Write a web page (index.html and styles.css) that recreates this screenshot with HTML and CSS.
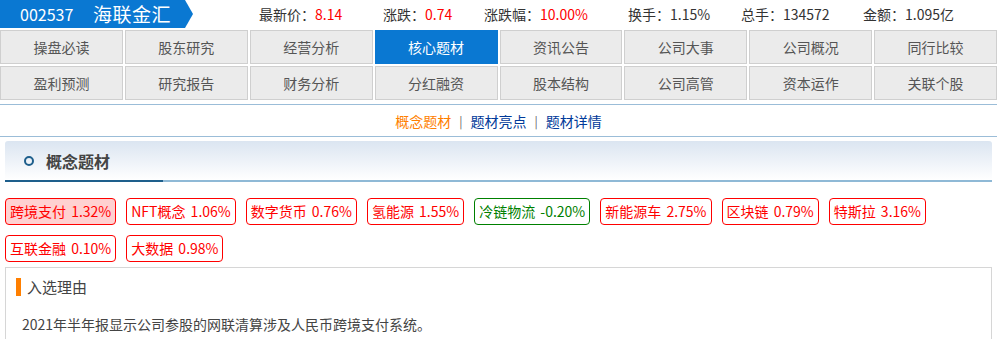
FILE: index.html
```html
<!DOCTYPE html>
<html lang="zh-CN">
<head>
  <meta charset="UTF-8">
  <title>海联金汇 核心题材</title>
  <link rel="stylesheet" href="styles.css">
</head>
<body>

  <!-- 股票行情头部 -->
  <div class="stock-head">
    <div class="stock-name">
      <span class="code">002537</span>
      <span class="name">海联金汇</span>
    </div>
    <div class="quote">
      <span>最新价：<em>8.14</em></span>
      <span>涨跌：<em>0.74</em></span>
      <span>涨跌幅：<em>10.00%</em></span>
      <span>换手：1.15%</span>
      <span>总手：134572</span>
      <span>金额：1.095亿</span>
    </div>
  </div>

  <!-- 栏目导航 -->
  <div class="tabs">
    <a class="tab">操盘必读</a>
    <a class="tab">股东研究</a>
    <a class="tab">经营分析</a>
    <a class="tab active">核心题材</a>
    <a class="tab">资讯公告</a>
    <a class="tab">公司大事</a>
    <a class="tab">公司概况</a>
    <a class="tab">同行比较</a>
    <a class="tab">盈利预测</a>
    <a class="tab">研究报告</a>
    <a class="tab">财务分析</a>
    <a class="tab">分红融资</a>
    <a class="tab">股本结构</a>
    <a class="tab">公司高管</a>
    <a class="tab">资本运作</a>
    <a class="tab">关联个股</a>
  </div>

  <div class="subnav">
    <a class="current">概念题材</a>
    <span class="sep">|</span>
    <a>题材亮点</a>
    <span class="sep">|</span>
    <a>题材详情</a>
  </div>

  <div class="section-head">
    <h2><i class="dot"></i>概念题材</h2>
  </div>

  <div class="tags">
    <span class="tag on">跨境支付 1.32%</span>
    <span class="tag">NFT概念 1.06%</span>
    <span class="tag">数字货币 0.76%</span>
    <span class="tag">氢能源 1.55%</span>
    <span class="tag down">冷链物流 -0.20%</span>
    <span class="tag">新能源车 2.75%</span>
    <span class="tag">区块链 0.79%</span>
    <span class="tag">特斯拉 3.16%</span>
    <span class="tag">互联金融 0.10%</span>
    <span class="tag">大数据 0.98%</span>
  </div>

  <div class="reason">
    <h3>入选理由</h3>
    <p>2021年半年报显示公司参股的网联清算涉及人民币跨境支付系统。</p>
  </div>

</body>
</html>
```

FILE: styles.css
```css
body {
  margin: 0;
  font-family: "Noto Sans CJK SC", "Liberation Sans", sans-serif;
  font-size: 14px;
  color: #444;
  background: #fff;
}

a {
  cursor: pointer;
}

/* 头部 */
.stock-head {
  display: flex;
  align-items: center;
  height: 28px;
}

.stock-name {
  display: flex;
  align-items: center;
  width: 193px;
  height: 28px;
  background: #0a78d2;
  color: #fff;
  clip-path: polygon(0 0, 185px 0, 193px 50%, 185px 100%, 0 100%);
}

.stock-name .code {
  margin-left: 20px;
  width: 73px;
  font-size: 16px;
  line-height: 28px;
}

.stock-name .name {
  font-size: 19px;
  line-height: 28px;
  letter-spacing: 0.5px;
}

.quote {
  display: grid;
  grid-template-columns: 124px 101px 144px 113px 122px auto;
  margin-left: 66px;
  line-height: 26px;
  color: #333;
}

.quote em {
  font-style: normal;
  color: #f00;
}

/* 栏目导航 */
.tabs {
  display: grid;
  grid-template-columns: repeat(8, 1fr);
  gap: 2px;
  margin-top: 2px;
}

.tab {
  height: 32px;
  line-height: 32px;
  text-align: center;
  background: #ebebeb;
  border: 1px solid #cfcfcf;
  color: #555;
}

.tab.active {
  background: #0a78d2;
  border-color: #0a78d2;
  color: #fff;
}

.subnav {
  display: flex;
  justify-content: center;
  align-items: center;
  gap: 8px;
  height: 31px;
  margin-top: 4px;
  border-top: 1px solid #9bbdd8;
  border-bottom: 1px solid #9bbdd8;
  color: #003a9a;
}

.subnav .current {
  color: #ff7f00;
}

.subnav .sep {
  color: #666;
  font-size: 12px;
}

/* 小标题 */
.section-head {
  margin: 4px 5px 0;
  height: 39px;
  border-radius: 3px 3px 0 0;
  background: linear-gradient(#dbe5f1, #fff);
  border-bottom: 2px solid #8fb9d6;
}

.section-head h2 {
  display: flex;
  align-items: center;
  width: 158px;
  height: 39px;
  margin: 0;
  border-bottom: 2px solid #1e5f8c;
  font-size: 16px;
  color: #444;
}

.dot {
  width: 6px;
  height: 6px;
  margin: 0 12px 0 19px;
  border: 2px solid #1e5f8c;
  border-radius: 50%;
}

/* 概念标签 */
.tags {
  display: flex;
  flex-wrap: wrap;
  gap: 10px;
  margin: 16px 5px 0;
}

.tag {
  height: 25px;
  line-height: 25px;
  padding: 0 4px;
  border: 1px solid #f00;
  border-radius: 4px;
  color: #f00;
  white-space: nowrap;
  word-spacing: 2px;
}

.tag.on {
  background: #ffd1d1;
}

.tag.down {
  border-color: #008000;
  color: #008000;
}

/* 入选理由 */
.reason {
  margin: 5px 5px 0;
  padding: 10px 15px 10px 10px;
  border: 1px solid #d6d6d6;
  height: 70px;
}

.reason h3 {
  margin: 0;
  padding-left: 6px;
  border-left: 5px solid #ff7f00;
  height: 18px;
  line-height: 18px;
  font-size: 15px;
  font-weight: normal;
  color: #444;
}

.reason p {
  margin: 18px 0 0 6px;
  line-height: 20px;
}
```
